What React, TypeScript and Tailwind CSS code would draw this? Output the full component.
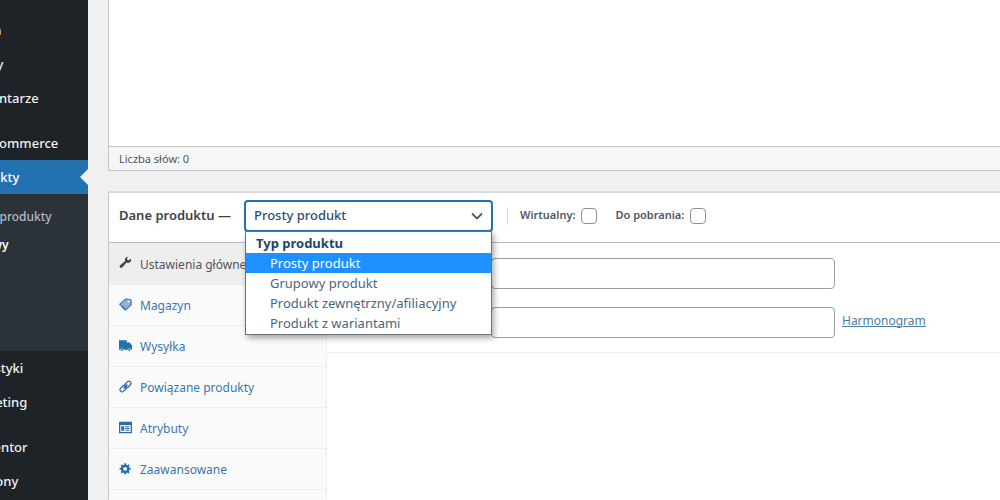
import React from 'react';

type MenuItem = { label: string; gap?: boolean };

const menuTop: MenuItem[] = [
  { label: 'Media' },
  { label: 'Strony' },
  { label: 'Komentarze' },
  { label: 'WooCommerce', gap: true }
];

const menuBottom: MenuItem[] = [
  { label: 'Statystyki' },
  { label: 'Marketing' },
  { label: 'Elementor', gap: true },
  { label: 'Szablony' }
];

const productTypes = [
  'Prosty produkt',
  'Grupowy produkt',
  'Produkt zewnętrzny/afiliacyjny',
  'Produkt z wariantami'
];

const iconClass = 'mb-1 h-[13px] w-[13px] shrink-0';

const WrenchIcon = () => (
  <svg viewBox="0 0 20 20" className={iconClass} fill="#444">
    <path d="M14.500 1.200c-2.600-.3-5 1.500-5.300 4.100-.1.800 0 1.500.3 2.200L1.800 14.300c-1 .9-1.100 2.400-.2 3.300.9 1 2.400 1 3.300 0l6.900-7.500c.5.2 1 .4 1.600.4 2.600.3 5-1.500 5.300-4.100.1-.8 0-1.600-.3-2.300l-3.300 2.400-2.400-.8-.3-2.500z" />
  </svg>
);

const TagIcon = () => (
  <svg viewBox="0 0 20 20" className={iconClass}>
    <path d="M1.200 9.500L10.500 1.500l3.500.5 4.500 1 .5 7-9 8.500z" fill="#8fb3d3" stroke="#4f86b5" strokeWidth="2" strokeLinejoin="round" />
    <path d="M4.500 13L10 18" fill="none" stroke="#2b6ca8" strokeWidth="2" />
    <circle cx="14.800" cy="5.500" r="1.500" fill="#fff" />
  </svg>
);

const TruckIcon = () => (
  <svg viewBox="0 0 20 20" className={iconClass} fill="#2271b1">
    <path d="M0 2h12v3.500h4.500L20 10v6.500h-1.700a2.600 2.600 0 0 0-5 0H6.700a2.600 2.600 0 0 0-5 0H0z" />
    <circle cx="4.200" cy="17" r="1.600" />
    <circle cx="15.800" cy="17" r="1.600" />
  </svg>
);

const LinkIcon = () => (
  <svg viewBox="0 0 20 20" className={iconClass} fill="none" stroke="#2b6ca8" strokeWidth="2">
    <rect x="8" y="3.500" width="11" height="6.500" rx="3.250" transform="rotate(-45 13.500 6.750)" />
    <rect x="1" y="10" width="11" height="6.500" rx="3.250" transform="rotate(-45 6.500 13.250)" />
    <path d="M7 13l6-6" />
  </svg>
);

const TableIcon = () => (
  <svg viewBox="0 0 20 20" className={iconClass} fill="#2b6ca8">
    <path fillRule="evenodd" d="M1 1h18a1 1 0 0 1 1 1v16a1 1 0 0 1-1 1H1a1 1 0 0 1-1-1V2a1 1 0 0 1 1-1zm1 5v11h16V6zM3.500 8H8v7H3.500zM9.500 8H16v1.800H9.500zm0 2.800H16v1.600H9.500zm0 2.600H16V15H9.500z" />
  </svg>
);

const GearIcon = () => (
  <svg viewBox="0 0 20 20" className={iconClass} fill="#2b6ca8">
    <path d="M18 12h-2.180c-.17.7-.44 1.350-.81 1.930l1.540 1.540-2.100 2.100-1.540-1.540c-.58.36-1.230.63-1.910.79V19H8v-2.180c-.68-.16-1.330-.43-1.910-.79l-1.540 1.540-2.120-2.120 1.540-1.540c-.36-.58-.63-1.230-.79-1.910H1V9.030h2.170c.16-.7.44-1.350.8-1.940L2.430 5.550l2.100-2.100 1.540 1.540c.58-.37 1.240-.64 1.930-.81V2h3v2.180c.68.16 1.330.43 1.910.79l1.540-1.540 2.120 2.120-1.540 1.540c.36.59.64 1.240.8 1.940H18V12zm-8.500 1.500c1.660 0 3-1.340 3-3s-1.340-3-3-3-3 1.340-3 3 1.340 3 3 3z" />
  </svg>
);

const tabs = [
  { icon: WrenchIcon, label: 'Ustawienia główne', active: true },
  { icon: TagIcon, label: 'Magazyn' },
  { icon: TruckIcon, label: 'Wysyłka' },
  { icon: LinkIcon, label: 'Powiązane produkty' },
  { icon: TableIcon, label: 'Atrybuty' },
  { icon: GearIcon, label: 'Zaawansowane' }
];

const MenuLink = ({ label, gap }: MenuItem) => (
  <li className={gap ? 'pt-[11px]' : ''}>
    <a href="#" className="flex h-[34px] items-center pt-0.5 pl-[35px] text-[#f0f0f1]">
      {label}
    </a>
  </li>
);

const Sidebar = () => (
  <nav className="-ml-18 w-40 shrink-0 bg-[#1d2327] pt-[13px] text-[13px] font-medium">
    <ul>
      {menuTop.map((item) => (
        <MenuLink key={item.label} {...item} />
      ))}
      <li>
        <a href="#" className="relative flex h-[34px] items-center bg-[#2271b1] pt-0.5 pl-[35px] text-white">
          Produkty
          <span className="absolute top-1/2 right-0 -translate-y-1/2 border-8 border-transparent border-r-[#f0f0f1]" />
        </a>
        <ul className="min-h-[157px] bg-[#2c3338] py-2">
          <li>
            <a href="#" className="flex h-7 items-center pt-0.5 pl-3 text-xs text-[#b4b9be]">Wszystkie produkty</a>
          </li>
          <li>
            <a href="#" className="flex h-7 items-center pt-0.5 pl-3 text-xs font-semibold text-white">Dodaj nowy</a>
          </li>
        </ul>
      </li>
      {menuBottom.map((item) => (
        <MenuLink key={item.label} {...item} />
      ))}
    </ul>
  </nav>
);

const TypeSelect = () => (
  <div className="relative w-[249px]">
    <select
      id="product-type"
      defaultValue={productTypes[0]}
      className="block h-8 w-full appearance-none rounded-[4px] border-2 border-[#2271b1] bg-white px-2 text-[13px] font-medium text-[#2c4f6b] outline-none"
    >
      {productTypes.map((type) => (
        <option key={type}>{type}</option>
      ))}
    </select>
    <svg viewBox="0 0 12 12" className="pointer-events-none absolute top-2.5 right-2.5 h-3 w-3" fill="none" stroke="#50575e" strokeWidth="1.800">
      <path d="M1 3.500l5 5 5-5" />
    </svg>
    <div
      role="listbox"
      aria-label="Typ produktu"
      className="absolute top-[31px] right-px left-px z-10 border border-[#6b7177] bg-white py-px text-[13px] leading-5 text-[#4a6580] shadow-[2px_3px_6px_rgba(0,0,0,0.35)]"
    >
      <div className="px-2.5 font-bold text-[#1d4667]">Typ produktu</div>
      {productTypes.map((type, index) => (
        <div
          key={type}
          role="option"
          aria-selected={index === 0}
          className={index === 0 ? 'bg-[#1e90ff] pl-6 text-white' : 'pl-6'}
        >
          {type}
        </div>
      ))}
    </div>
  </div>
);

const Check = ({ label }: { label: string }) => (
  <label className="flex items-center gap-1.5 text-[11px] font-semibold text-[#50575e]">
    {label}
    <input type="checkbox" className="h-4 w-4 appearance-none rounded-[4px] border border-[#8c8f94] bg-white" />
  </label>
);

const fieldClass = 'h-[31px] w-[344px] rounded-[4px] border border-[#9a9da1] bg-white px-2';

const ProductData = () => (
  <section className="mt-5 flex grow flex-col border-t-2 border-l border-t-[#dcdcde] border-l-[#c3c4c7] bg-white">
    <header className="flex h-[50px] items-center border-b border-[#b9bbbe] pb-1 pl-2.5">
      <label htmlFor="product-type" className="w-[125px] text-[13px] font-semibold text-[#3c434a]">
        Dane produktu —
      </label>
      <TypeSelect />
      <div className="ml-3.5 flex h-[18px] items-center gap-[18px] border-l border-[#dcdcde] pl-3">
        <Check label="Wirtualny:" />
        <Check label="Do pobrania:" />
      </div>
    </header>
    <div className="flex grow">
      <ul className="w-[218px] shrink-0 border-r border-[#eee] bg-[#fafafa]">
        {tabs.map((tab) => {
          const Icon = tab.icon;
          return (
            <li key={tab.label} className="border-b border-[#eee]">
              <a
                href="#"
                className={
                  tab.active
                    ? 'flex h-[41px] items-center gap-2 bg-[#eee] pt-0.5 pl-2.5 text-xs text-[#555]'
                    : 'flex h-10 items-center gap-2 pt-0.5 pl-2.5 text-xs text-[#3a77ad]'
                }
              >
                <Icon />
                {tab.label}
              </a>
            </li>
          );
        })}
      </ul>
      <div className="grow text-xs">
        <div className="flex flex-col gap-[18px] border-b border-[#eee] pt-[15px] pb-3.5 pl-[164px]">
          <input type="text" aria-label="Cena (zł)" className={fieldClass} />
          <div className="flex items-center">
            <input type="text" aria-label="Cena promocyjna (zł)" className={fieldClass} />
            <a href="#" className="mb-1 ml-[7px] text-[#4b80a8] underline">Harmonogram</a>
          </div>
        </div>
      </div>
    </div>
  </section>
);

const App = () => {
  return (
    <div className="flex h-screen overflow-hidden bg-[#f0f0f1] font-['Noto_Sans','Open_Sans',sans-serif]">
      <Sidebar />
      <main className="flex grow flex-col pl-5">
        <section className="border-l border-[#c3c4c7]">
          <div className="h-[146px] bg-white" />
          <div className="flex h-[25px] items-center border-y border-[#c3c4c7] bg-[#f6f6f7] pt-px pl-2.5 text-[11px] text-[#50575e]">
            Liczba słów: 0
          </div>
        </section>
        <ProductData />
      </main>
    </div>
  );
};

export default App;
